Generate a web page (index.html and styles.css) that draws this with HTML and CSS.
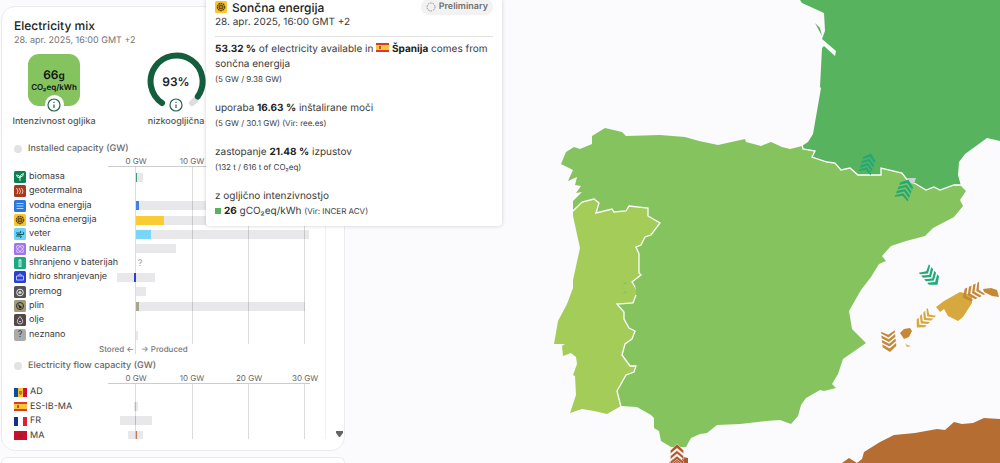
FILE: index.html
```html
<!DOCTYPE html>
<html lang="sl">
<head>
<meta charset="utf-8">
<title>Electricity mix</title>
<link rel="stylesheet" href="styles.css">
</head>
<body>
<svg class="map" viewBox="0 0 1000 463" preserveAspectRatio="xMinYMin slice" aria-hidden="true">
  <defs>
    <g id="flow">
      <path d="M-6-5 0-11 6-5V-2L0-7-6-2Z"/>
      <path d="M-6 0 0-5 6 0V3L0-2-6 3Z"/>
      <path d="M-6 5 0 0 6 5V8L0 3-6 8Z"/>
      <path d="M-6 10 0 5 6 10V12L0 8-6 12Z"/>
    </g>
  </defs>
  <path fill="#58b35f" d="M800 0 802 3 824 13 825 31 822 39 836 51 835 56 824 46 822 48 820 87 821 88 813 134 808 142 802 146 803 149 815 151 812 157 827 162 835 163 841 170 850 168 858 175H881V168L902 173 908 181 916 184 926 190 934 187 940 190 954 185 961 186 958 175 959 162 965 154 987 138 1000 141V0Z"/>
  <path fill="#58b35f" d="M815 23 820 28 822 36Z"/>
  <path fill="#84c35e" d="M573 211V201L582 192 576 193 581 186 575 185 577 177 568 181 573 170 561 164 566 152 574 147 580 149 592 144V136L605 128 622 132 626 136 660 135 685 137 699 141 718 145 745 139 746 142 761 146 771 142 782 147 790 149 802 146 803 149 815 151 812 157 827 162 835 163 841 170 850 168 858 175H881V168L902 173 908 181 916 184 926 190 934 187 940 190 954 185 961 186 966 191 960 200 963 206 954 217 933 228 925 236 906 241 891 246 882 256 886 261 879 264 871 277 861 290 849 311 852 329 866 343 843 359 838 374 832 384 836 388 824 391 820 390 806 398 801 405 798 416 791 424 780 420 766 421 740 424 717 425 707 433 700 434 691 438 686 447H671L661 441 659 431 654 428V418L651 415 637 407 621 406Z"/>
  <path fill="#a3cd58" d="M621 406 607 414 594 411 582 409 570 413 576 395 575 376 573 375 577 364 576 357 571 353 563 356 562 346 565 344H554L558 321 567 304 573 288V280L580 248 573 216V210L582 202 594 199 599 203 596 213 612 209 614 212 626 211 629 206 648 208V216L660 223 651 235 645 237 641 245 636 247 639 254V273L641 275 632 282 637 290 633 303 617 304 624 312V319L629 328 635 331 632 339 625 344 622 355 630 366H636L634 372 626 375 617 391Z"/>
  <g fill="none" stroke="#fff" stroke-width="1.3">
    <path d="M573 211 582 202 594 199 599 203 596 213 612 209 614 212 626 211 629 206 648 208V216L660 223 651 235 645 237 641 245 636 247 639 254V273L641 275 632 282 637 290M636 295 633 303 617 304 624 312V319L629 328 635 331 632 339 625 344 622 355 630 366H636L634 372 626 375 617 391 621 407"/>
    <path d="M802 144 803 149 815 151 812 157 827 162 835 163 841 170 850 168 858 175H881V168L902 173 908 181 916 184 926 190 934 187 940 190 954 185 961 185"/>
  </g>
  <path fill="#84c35e" d="M623 283 627 282 625 285ZM622 294 626 291 626 293ZM635 286 640 289 637 294Z"/>
  <path fill="#c9d3cf" d="M907 178H916L914 184 910 183Z"/>
  <path fill="#b56d31" d="M842 463 849 458 857 463 862 459 864 452 880 442 894 435 915 433 937 429 945 430 954 422 962 424 973 423 984 418 1000 419V463Z"/>
  <g fill="#d7a83e">
    <path d="M936 307 944 301 960 292 972 295V303L963 317 958 321 948 316 944 309 940 312Z"/>
    <path d="M905 343 907 345 911 346 907 347Z"/>
    <use href="#flow" transform="translate(924 320) rotate(224) scale(.94)"/>
  </g>
  <g fill="#c48836">
    <path d="M900 333 904 329 910 328 912 331 909 337 904 339Z"/>
    <path d="M983 289 991 288 997 290 999 297 992 296 984 292Z"/>
    <use href="#flow" transform="translate(889 342) rotate(174) scale(1.15 .92)"/>
    <use href="#flow" transform="translate(972 293) rotate(244) scale(1.15 .94)"/>
  </g>
  <g fill="#23a877">
    <use href="#flow" transform="translate(868 163) rotate(18) scale(1.05 .9)"/>
    <use href="#flow" transform="translate(905 189) rotate(20) scale(1.15 .9)"/>
    <use href="#flow" transform="translate(931 277) rotate(140) scale(1.1 .92)"/>
  </g>
  <g fill="#b1582c">
    <path d="M669 463 673 459 682 460 683 457 688 458V463Z"/>
    <use href="#flow" transform="translate(677 456) scale(1.1)" stroke="#f6eee5" stroke-width=".5"/>
  </g>
</svg>

<main class="panel">
  <section class="card">
    <h1 class="title">Electricity mix</h1>
    <p class="date">28. apr. 2025, 16:00 GMT +2</p>
    <div class="stats">
      <div class="stat">
        <div class="intensity"><span><b class="amount">66</b>g</span><span class="unit">CO₂eq/kWh</span></div>
        <button class="info" aria-label="Intenzivnost ogljika"><svg viewBox="0 0 14 14"><circle cx="7" cy="7" r="6"/><path d="M7 6.4V10M7 3.8V5"/></svg></button>
        <span class="stat-name">Intenzivnost ogljika</span>
      </div>
      <div class="stat">
        <div class="gauge">
          <svg viewBox="0 0 60 60"><path class="gauge-rest" d="M49.500 48 46 51"/><path class="gauge-value" d="M16 51A26 26 0 1 1 51.800 44.500"/></svg>
          <span>93%</span>
        </div>
        <button class="info" aria-label="nizkoogljična"><svg viewBox="0 0 14 14"><circle cx="7" cy="7" r="6"/><path d="M7 6.4V10M7 3.8V5"/></svg></button>
        <span class="stat-name">nizkoogljična</span>
      </div>
    </div>

    <div class="charts">
      <h2 class="chart-title"><i class="dot"></i>Installed capacity (GW)</h2>
      <div class="chart">
        <ul class="names">
          <li><svg class="icon" viewBox="0 0 12 12"><rect width="12" height="12" rx="1.5" fill="#0d8050"/><path d="M6 10V6M6 7Q3 7 2.5 4Q6 4 6 7Q6 3 9.5 2.5Q9.5 6 6 6" fill="none" stroke="#d8f3e4"/></svg>biomasa</li>
          <li><svg class="icon" viewBox="0 0 12 12"><rect width="12" height="12" rx="1.5" fill="#a63a1c"/><path d="M2.5 3 4 6 3 9M5 3 6.500 6 5.500 9M7.500 3 9 6 8 9" fill="none" stroke="#f3c5b4"/></svg>geotermalna</li>
          <li><svg class="icon" viewBox="0 0 12 12"><rect width="12" height="12" rx="1.5" fill="#2878de"/><path d="M2.500 3.500H9.500M2.500 6H9.500M2.500 8.500H9.500" stroke="#a8d2ff"/></svg>vodna energija</li>
          <li><svg class="icon" viewBox="0 0 12 12"><rect width="12" height="12" rx="1.5" fill="#fbc52c"/><circle cx="6" cy="6" r="3.600" fill="none" stroke="#5b4309" stroke-width="1.400" stroke-dasharray="1.800 .5"/><circle cx="6" cy="6" r="2.500" fill="#6d5110"/><circle cx="6" cy="6" r="1" fill="#c99b22"/></svg>sončna energija</li>
          <li><svg class="icon" viewBox="0 0 12 12"><rect width="12" height="12" rx="1.5" fill="#6dd2f5"/><path d="M2 5H6.500Q7.500 3.500 6 3M3 6.500H9.500Q10.500 4.500 8.700 4M2 8H7Q8 9.500 6 9.500" fill="none" stroke="#145267"/></svg>veter</li>
          <li><svg class="icon" viewBox="0 0 12 12"><rect width="12" height="12" rx="1.5" fill="#a274ee"/><g fill="none" stroke="#e8dcff" stroke-width=".8"><ellipse cx="6" cy="6" rx="4.500" ry="2" transform="rotate(45 6 6)"/><ellipse cx="6" cy="6" rx="4.500" ry="2" transform="rotate(-45 6 6)"/></g></svg>nuklearna</li>
          <li><svg class="icon" viewBox="0 0 12 12"><rect width="12" height="12" rx="1.5" fill="#1ca883"/><path d="M4.500 3H5.200V2H6.800V3H7.500V10H4.500Z" fill="#a8eed6"/><path d="M6 4V9" stroke="#56c4a5"/></svg>shranjeno v baterijah</li>
          <li><svg class="icon" viewBox="0 0 12 12"><rect width="12" height="12" rx="1.5" fill="#2b3fd0"/><path d="M2.500 5H9.500V9H2.500ZM4.500 5Q4.500 3 6 3T7.500 5" fill="none" stroke="#b6c1ff"/></svg>hidro shranjevanje</li>
          <li><svg class="icon" viewBox="0 0 12 12"><rect width="12" height="12" rx="1.5" fill="#545255"/><circle cx="6" cy="6.500" r="3.300" fill="none" stroke="#eee"/><path d="M4 7 6 4.500 8 7 6 8Z" fill="#ddd"/></svg>premog</li>
          <li><svg class="icon" viewBox="0 0 12 12"><rect width="12" height="12" rx="1.5" fill="#a29a7d"/><circle cx="6" cy="6" r="3.500" fill="none" stroke="#2c2a20"/><path d="M4 4 8 7Q7 9 5 8Z" fill="#2c2a20"/></svg>plin</li>
          <li><svg class="icon" viewBox="0 0 12 12"><rect width="12" height="12" rx="1.5" fill="#54474a"/><path d="M6 2.500Q9 6 8.700 7.500A2.700 2.500 0 0 1 3.300 7.500Q3 6 6 2.500ZM5 7Q6 9 7 7" fill="none" stroke="#dccfd0" stroke-width=".9"/></svg>olje</li>
          <li><span class="icon unknown">?</span>neznano</li>
        </ul>
        <svg class="plot" viewBox="0 0 217 202">
          <g class="ticks"><text x="28" y="10">0 GW</text><text x="84" y="10">10 GW</text><text x="141" y="10">20 GW</text><text x="197" y="10">30 GW</text></g>
          <path class="axis" d="M0 12.500H202"/>
          <g class="cap">
            <path d="M28 19h7v9h-7ZM28 47h146v9H28ZM28 62h170v9H28ZM28 76h173v9H28ZM28 90h40v9H28ZM9 119h38v9H9ZM28 133h10v9H28ZM28 148h169v9H28ZM28 177h2v9h-2Z"/>
          </g>
          <path class="grid" d="M27.500 13V200M84.500 13V190M140.500 13V190M196.500 13V190"/>
          <path fill="#3f9c73" d="M28 19h1v9h-1Z"/><path fill="#3f83e0" d="M28 47h3v9h-3Z"/><path fill="#f8cc32" d="M28 62h28v9H28Z"/><path fill="#7bd5f6" d="M28 76h15v9H28Z"/><path fill="#2b3fd0" d="M26 119h2v9h-2Z"/><path fill="#a9a48c" d="M28 148h3v9h-3Z"/>
          <text class="unknown-mark" x="32" y="112">?</text>
        </svg>
      </div>
      <div class="legend"><span>Stored ←</span><span>→ Produced</span></div>

      <h2 class="chart-title flow-title"><i class="dot"></i>Electricity flow capacity (GW)</h2>
      <div class="chart flows">
        <ul class="names">
          <li><svg class="flag" viewBox="0 0 13 9"><path fill="#0b4da2" d="M0 0h4v9H0z"/><path fill="#f5c32c" d="M4 0h5v9H4z"/><path fill="#d0103a" d="M9 0h4v9H9z"/><path fill="#b7792c" d="M5 3h3v3L6.500 7 5 6z"/></svg>AD</li>
          <li><svg class="flag" viewBox="0 0 13 9"><path fill="#d83a2e" d="M0 0h13v9H0z"/><path fill="#f8c53a" d="M0 2h13v5H0z"/><path fill="#b85a2c" d="M3 3h2v3H3z"/></svg>ES-IB-MA</li>
          <li><svg class="flag" viewBox="0 0 13 9"><path fill="#fff" d="M0 0h13v9H0z"/><path fill="#10318c" d="M0 0h4v9H0z"/><path fill="#df1f35" d="M9 0h4v9H9z"/></svg>FR</li>
          <li><svg class="flag" viewBox="0 0 13 9"><path fill="#c8102e" d="M0 0h13v9H0z"/><path fill="#6d3328" d="M6.500 2.500 8 6.500 4.500 4H8.500L5 6.500Z"/></svg>MA</li>
        </ul>
        <svg class="plot" viewBox="0 0 217 68">
          <g class="ticks"><text x="28" y="10">0 GW</text><text x="84" y="10">10 GW</text><text x="141" y="10">20 GW</text><text x="197" y="10">30 GW</text></g>
          <path class="axis" d="M0 12.500H202"/>
          <path class="cap" d="M26 31h4v9h-4ZM12 45h32v9H12ZM20 60h15v8H20Z"/>
          <path class="grid" d="M27.500 13V68M84.500 13V68M140.500 13V68M196.500 13V68"/>
          <path fill="#a1cd92" d="M27 31h1v9h-1ZM27 45h1v9h-1Z"/><path fill="#bf7852" d="M28 60h1v8h-1Z"/>
        </svg>
      </div>
    </div>
    <svg class="more" viewBox="0 0 7 6" aria-hidden="true"><path d="M0 0H7V2L4 6H3L0 2Z"/></svg>
  </section>
  <section class="card next"></section>
</main>

<aside class="tooltip">
  <header class="tip-head">
    <svg class="icon" viewBox="0 0 12 12"><rect width="12" height="12" rx="1.5" fill="#fbc52c"/><circle cx="6" cy="6" r="3.600" fill="none" stroke="#5b4309" stroke-width="1.400" stroke-dasharray="1.800 .5"/><circle cx="6" cy="6" r="2.500" fill="#6d5110"/><circle cx="6" cy="6" r="1" fill="#c99b22"/></svg>
    <h2 class="tip-title">Sončna energija</h2>
    <span class="badge"><svg viewBox="0 0 10 10"><circle cx="5" cy="5" r="4"/></svg>Preliminary</span>
  </header>
  <p class="tip-date">28. apr. 2025, 16:00 GMT +2</p>
  <div class="tip-block">
    <p><b>53.32 %</b> of electricity available in <svg class="flag" viewBox="0 0 13 9"><path fill="#d83a2e" d="M0 0h13v9H0z"/><path fill="#f8c53a" d="M0 2h13v5H0z"/><path fill="#b85a2c" d="M3 3h2v3H3z"/></svg> <b>Španija</b> comes from sončna energija</p>
    <small>(5 GW / 9.38 GW)</small>
  </div>
  <div class="tip-block">
    <p>uporaba <b>16.63 %</b> inštalirane moči</p>
    <small>(5 GW / 30.1 GW) (Vir: ree.es)</small>
  </div>
  <div class="tip-block">
    <p>zastopanje <b>21.48 %</b> izpustov</p>
    <small>(132 t / 616 t of CO₂eq)</small>
  </div>
  <div class="tip-block">
    <p>z ogljično intenzivnostjo</p>
    <p><i class="swatch"></i><b>26</b> gCO₂eq/kWh <small>(Vir: INCER ACV)</small></p>
  </div>
</aside>
</body>
</html>
```

FILE: styles.css
```css
* { box-sizing: border-box; margin: 0; padding: 0; }
body {
  position: relative;
  height: 100vh;
  overflow: hidden;
  background: #fbfafc;
  color: #3a3a3a;
  font: 10px/14px Inter, "Liberation Sans", sans-serif;
  text-rendering: geometricPrecision;
}
ul { list-style: none; }
.map { position: absolute; inset: 0; width: 100%; height: 100%; }

.panel {
  position: relative;
  display: flex;
  flex-direction: column;
  gap: 6px;
  width: 345px;
  height: 100%;
  padding: 6px 0 0 1px;
}
.card {
  position: relative;
  flex: none;
  padding: 12px 18px 11px 12px;
  border: 1px solid #ebebee;
  border-radius: 14px;
  background: #fff;
}
.next { flex: 1; border-bottom: 0; border-radius: 14px 14px 0 0; padding: 0; }
.title { font-size: 12px; line-height: 14px; font-weight: 500; color: #222; }
.date { font-size: 9px; line-height: 16px; color: #757575; }

.stats { display: flex; gap: 42px; margin-top: 3px; }
.stat { display: flex; flex-direction: column; align-items: center; width: 80px; white-space: nowrap; }
.intensity {
  display: flex;
  flex-direction: column;
  align-items: center;
  justify-content: center;
  width: 52px;
  height: 52px;
  margin: 2px 0;
  border-radius: 11px;
  background: #84c35e;
  color: #111;
  font-size: 10px;
  line-height: 12px;
  font-weight: 600;
}
.amount { font-size: 12px; font-weight: 600; }
.unit { font-size: 8px; line-height: 10px; font-weight: 600; }
.gauge { display: grid; place-items: center; width: 60px; height: 56px; font-size: 12px; font-weight: 600; color: #222; }
.gauge > * { grid-area: 1 / 1; }
.gauge svg { width: 60px; height: 60px; fill: none; stroke-width: 6; stroke-linecap: round; }
.gauge-value { stroke: #135e3c; }
.gauge-rest { stroke: #ddd; }
.info {
  z-index: 1;
  display: grid;
  place-items: center;
  width: 19px;
  height: 19px;
  margin-top: -13px;
  border: 0;
  border-radius: 50%;
  background: #fff;
}
.info svg { width: 14px; height: 14px; fill: none; stroke: #246447; stroke-width: 1.2; }
.stat-name { font-size: 9px; line-height: 16px; font-weight: 500; color: #555; }

.charts { margin-top: 12px; border-right: 1px solid #f1f1f3; }
.chart-title { display: flex; align-items: center; gap: 6px; font-size: 9px; line-height: 14px; font-weight: 500; color: #666; }
.dot { width: 8px; height: 8px; border-radius: 50%; background: #e2e2e2; }
.chart { display: grid; grid-template-columns: 94px 1fr; margin-top: -2px; }
.names { display: grid; grid-template-rows: repeat(12, 1fr); height: 172px; margin-top: 16px; }
.names li { display: flex; align-items: center; gap: 3px; font-size: 9px; white-space: nowrap; }
.icon { flex: none; width: 12px; height: 12px; }
.unknown { border-radius: 2px; background: #aaa; font-size: 9px; line-height: 12px; text-align: center; }
.plot { display: block; width: 100%; }
.ticks text { font-size: 8px; fill: #666; text-anchor: middle; }
.axis { stroke: #ccc; }
.cap { fill: #e8e7e9; }
.grid { stroke: #000; stroke-opacity: .14; }
.unknown-mark { font-size: 9px; fill: #999; text-anchor: middle; }
.legend { display: flex; gap: 7px; margin: -14px 0 0 85px; font-size: 8px; line-height: 14px; font-weight: 500; color: #777; }
.flow-title { margin-top: 3px; }
.flows .names { grid-template-rows: repeat(4, 1fr); height: 58px; margin: 14px 0 -4px; }
.flag { width: 13px; height: 9px; }
.more { position: absolute; right: 1px; bottom: 13px; width: 7px; height: 6px; fill: #666; }

.tooltip {
  position: absolute;
  top: 0;
  left: 206px;
  width: 296px;
  padding: 0 9px 7px;
  border-radius: 0 0 4px 4px;
  background: #fff;
  box-shadow: 0 0 4px rgb(0 0 0 / 18%);
  font-size: 10px;
  line-height: 15px;
}
.tip-head { display: flex; align-items: center; gap: 5px; height: 14px; }
.tip-title { font-size: 12px; font-weight: 500; color: #222; }
.badge {
  display: flex;
  align-items: center;
  gap: 3px;
  margin-left: auto;
  padding: 1px 5px;
  border-radius: 8px;
  background: #f2f2f2;
  font-size: 9px;
  line-height: 14px;
  font-weight: 600;
  color: #707070;
}
.badge svg { width: 10px; height: 10px; fill: none; stroke: #888; stroke-dasharray: 1.5 1; }
.tip-date { padding: 1px 0 6px; border-bottom: 1px solid #e3e3e3; font-size: 10px; }
.tip-block { margin-top: 14px; }
.tip-date + .tip-block { margin-top: 5px; }
.tip-block b { font-weight: 700; color: #222; }
.tip-block small { font-size: 8px; }
.tip-block > small { display: block; line-height: 15px; }
.swatch { display: inline-block; width: 6px; height: 6px; margin-right: 3px; background: #58b35f; }
```
